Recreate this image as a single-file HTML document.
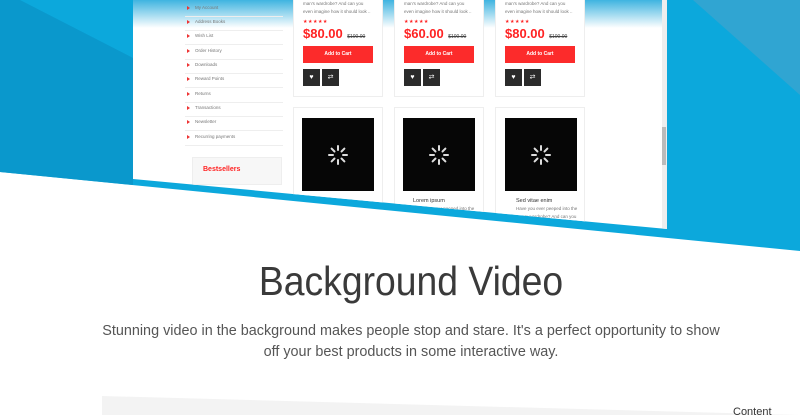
<!DOCTYPE html>
<html><head><meta charset="utf-8"><style>
*{margin:0;padding:0;box-sizing:border-box}
body{width:800px;height:415px;overflow:hidden;background:#fff;position:relative;font-family:"Liberation Sans",sans-serif}
.abs{position:absolute}
.side{left:185px;width:98px;font-size:4.5px;color:#777}
.side div{position:absolute;left:0;width:98px;height:14px;border-bottom:1px solid #eee;padding-left:10px;line-height:10px}
.side div:before{content:"";position:absolute;left:2px;top:3px;border-left:3px solid #e33;border-top:2px solid transparent;border-bottom:2px solid transparent}
.card{border:1px solid #eee;background:#fff}
.txt{font-size:4.5px;color:#777;line-height:8px}
.stars{color:#f22;font-size:5px;letter-spacing:0.5px}
.price{color:#f22;font-size:13px;font-weight:bold}
.old{font-size:5px;color:#444;text-decoration:line-through}
.btn{background:#fc2b2b;color:#fff;font-size:5px;font-weight:bold;text-align:center;line-height:17px}
.ib{background:#2b2b2b;width:17px;height:17px;color:#fff;font-size:7px;text-align:center;line-height:17px}
.img{background:#060606}
</style></head><body>
<svg class="abs" style="left:0;top:0" width="800" height="260">
<polygon points="0,0 800,0 800,251 0,172" fill="#0ca8dc"/>
<polygon points="0,0 133,0 133,185 0,172" fill="#0a98cc"/>
<polygon points="20,0 133,0 133,58" fill="#0ca8dc"/>
<polygon points="693,0 800,0 800,95" fill="#30a5d2"/>
</svg>
<div class="abs" style="left:133px;top:0;width:534px;height:230px;clip-path:polygon(0 0,100% 0,100% 229px,0 179px);background:linear-gradient(#3fb4e0 0,#fff 28px,#fff 100%)">
<div class="abs" style="left:529px;top:0;width:5px;height:230px;background:#eee"></div>
<div class="abs" style="left:529px;top:127px;width:4px;height:38px;background:#bbb"></div>
</div>
<div class="abs" style="left:133px;top:0;width:534px;height:230px;clip-path:polygon(0 0,100% 0,100% 229px,0 179px)">
<div class="abs side" style="left:52px;top:0">
<div style="top:3px">My Account</div><div style="top:17px">Address Books</div><div style="top:31px">Wish List</div><div style="top:46px">Order History</div><div style="top:60px">Downloads</div><div style="top:74px">Reward Points</div><div style="top:89px">Returns</div><div style="top:103px">Transactions</div><div style="top:117px">Newsletter</div><div style="top:132px">Recurring payments</div>
</div>
<div class="abs" style="left:59px;top:157px;width:90px;height:28px;background:#f7f7f7;border:1px solid #eee;color:#f22;font-size:7px;font-weight:bold;padding:8px 0 0 10px">Bestsellers</div>
</div>
<div class="abs" style="left:0;top:0;width:800px;height:240px;clip-path:polygon(133px 0,667px 0,667px 229px,133px 179px)">
<div class="abs card" style="left:293px;top:-5px;width:90px;height:102px"></div>
<div class="abs card" style="left:394px;top:-5px;width:90px;height:102px"></div>
<div class="abs card" style="left:495px;top:-5px;width:90px;height:102px"></div>
<div class="abs card" style="left:293px;top:107px;width:90px;height:130px"></div>
<div class="abs card" style="left:394px;top:107px;width:90px;height:130px"></div>
<div class="abs card" style="left:495px;top:107px;width:90px;height:130px"></div>

<div class="abs" style="left:303px;top:0"><div class="txt">man's wardrobe? And can you<br>even imagine how it should look ..</div><div class="stars" style="margin-top:3px">★★★★★</div><div><span class="price">$80.00</span> <span class="old">$100.00</span></div></div>
<div class="abs" style="left:404px;top:0"><div class="txt">man's wardrobe? And can you<br>even imagine how it should look ..</div><div class="stars" style="margin-top:3px">★★★★★</div><div><span class="price">$60.00</span> <span class="old">$100.00</span></div></div>
<div class="abs" style="left:505px;top:0"><div class="txt">man's wardrobe? And can you<br>even imagine how it should look ..</div><div class="stars" style="margin-top:3px">★★★★★</div><div><span class="price">$80.00</span> <span class="old">$100.00</span></div></div>

<div class="abs btn" style="left:303px;top:46px;width:70px;height:17px">Add to Cart</div>
<div class="abs btn" style="left:404px;top:46px;width:70px;height:17px">Add to Cart</div>
<div class="abs btn" style="left:505px;top:46px;width:70px;height:17px">Add to Cart</div>
<div class="abs ib" style="left:303px;top:69px">♥</div><div class="abs ib" style="left:322px;top:69px">⇄</div>
<div class="abs ib" style="left:404px;top:69px">♥</div><div class="abs ib" style="left:423px;top:69px">⇄</div>
<div class="abs ib" style="left:505px;top:69px">♥</div><div class="abs ib" style="left:524px;top:69px">⇄</div>

<div class="abs img" style="left:302px;top:118px;width:72px;height:73px"></div>
<div class="abs img" style="left:403px;top:118px;width:72px;height:73px"></div>
<div class="abs img" style="left:505px;top:118px;width:72px;height:73px"></div>
<svg class="abs" style="left:0;top:0" width="800" height="240">
<defs><g id="sp" stroke="#ddd" stroke-width="2" stroke-linecap="round">
<line x1="0" y1="-5" x2="0" y2="-9"/><line x1="0" y1="5" x2="0" y2="9"/><line x1="-5" y1="0" x2="-9" y2="0"/><line x1="5" y1="0" x2="9" y2="0"/>
<line x1="3.5" y1="3.5" x2="6.4" y2="6.4"/><line x1="-3.5" y1="-3.5" x2="-6.4" y2="-6.4"/><line x1="3.5" y1="-3.5" x2="6.4" y2="-6.4"/><line x1="-3.5" y1="3.5" x2="-6.4" y2="6.4"/></g></defs>
<use href="#sp" x="338" y="155"/><use href="#sp" x="439" y="155"/><use href="#sp" x="541" y="155"/>
</svg>
<div class="abs" style="left:413px;top:198px;font-size:5.5px;color:#333">Lorem ipsum</div>
<div class="abs txt" style="left:413px;top:205px">Have you ever peeped into the<br>man's wardrobe? And can you</div>
<div class="abs" style="left:516px;top:198px;font-size:5.5px;color:#333">Sed vitae enim</div>
<div class="abs txt" style="left:516px;top:205px">Have you ever peeped into the<br>man's wardrobe? And can you</div>
</div>

<div class="abs" style="left:11px;top:258px;width:800px;text-align:center;font-size:41px;color:#3a3a3a;transform:scaleX(0.91);transform-origin:400px 0">Background Video</div>
<div class="abs" style="left:61px;top:320px;width:700px;text-align:center;font-size:15px;line-height:21px;color:#555;transform:scaleX(0.96);transform-origin:350px 0">Stunning video in the background makes people stop and stare. It's a perfect opportunity to show<br>off your best products in some interactive way.</div>
<svg class="abs" style="left:0;top:390px" width="800" height="25"><polygon points="102,6 800,25 102,25" fill="#f3f3f3"/></svg>
<div class="abs" style="left:733px;top:406px;font-size:11px;color:#333">Content</div>
</body></html>
